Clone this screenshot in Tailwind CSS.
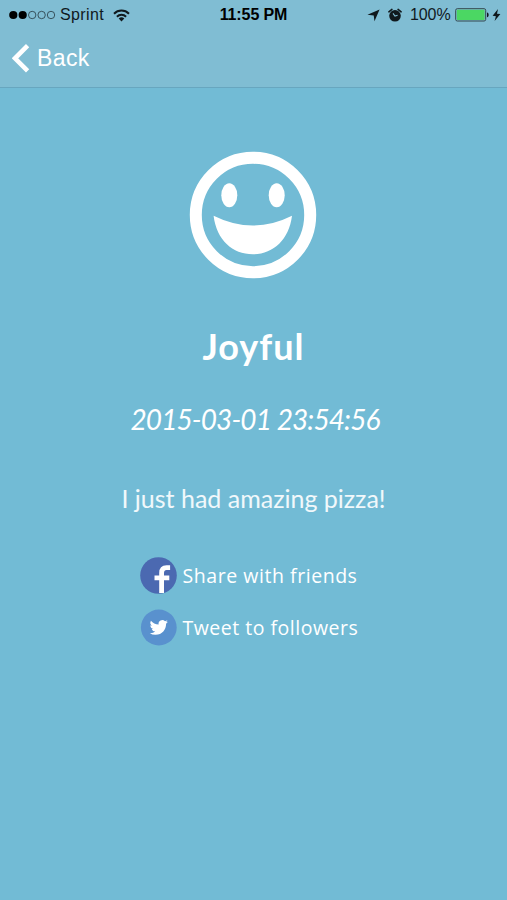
<!DOCTYPE html>
<html lang="en">
  <head>
    <meta charset="UTF-8" />
    <meta name="viewport" content="width=device-width, initial-scale=1.0" />
    <title>Joyful</title>
    <script src="https://cdn.jsdelivr.net/npm/@tailwindcss/browser@4"></script>
  </head>
  <body class="h-screen flex flex-col overflow-hidden bg-[#72bbd5] text-white">
    <header class="h-[88px] shrink-0 bg-[#80bdd3] border-b border-[#68a6bf]">
      <!-- Status bar -->
      <div
        class="h-[30px] pl-[9px] pr-[6px] grid grid-cols-[1fr_auto_1fr] items-center text-[#10191d] text-[16px] leading-none font-['Liberation_Sans',sans-serif]"
      >
        <div class="flex items-center">
          <svg class="w-[47px] h-[10px]" viewBox="0 0 47 10">
            <g fill="#000">
              <circle cx="4.3" cy="5" r="4.1" />
              <circle cx="13.7" cy="5" r="4.1" />
            </g>
            <g fill="none" stroke="#24373f" stroke-width=".8">
              <circle cx="23.2" cy="5" r="3.7" />
              <circle cx="32.6" cy="5" r="3.7" />
              <circle cx="42" cy="5" r="3.7" />
            </g>
          </svg>
          <span class="ml-1 w-[45px] tracking-[0.4px]">Sprint</span>
          <svg class="ml-[8px] w-[17px] h-[13px]" viewBox="0 0 17 13">
            <g fill="none" stroke="#10191d" stroke-width="2">
              <path d="M1 4.7a10.6 10.6 0 0 1 15 0" />
              <path d="M3.900 7.700a6.500 6.500 0 0 1 9.200 0" />
            </g>
            <path d="M8.500 12.500 5.700 9.600a4 4 0 0 1 5.600 0z" fill="#10191d" />
          </svg>
        </div>
        <span class="mr-[3px] font-bold tracking-[-0.1px] text-black">11:55 PM</span>
        <div class="flex items-center justify-end">
          <svg class="w-[13px] h-[13px]" viewBox="0 0 12 12">
            <path d="M11.6.4 6.900 11.300 6.200 6.100.4 5.400z" fill="#10191d" />
          </svg>
          <svg class="ml-[8px] w-[14px] h-[14px]" viewBox="0 0 14 14">
            <circle cx="7" cy="7.800" r="5.800" fill="#10191d" />
            <path
              d="M.9 3.800 3.900 1.400M13.100 3.800 10.100 1.400"
              stroke="#10191d"
              stroke-width="1.6"
              stroke-linecap="round"
            />
            <path d="M5 5.400 7 8l2.600-.7" fill="none" stroke="#80bdd3" stroke-width="1.1" />
          </svg>
          <span class="ml-[8px] w-[41px] tracking-[-0.1px]">100%</span>
          <svg class="ml-[4px] w-[35px] h-[14px]" viewBox="0 0 35 14">
            <rect x=".7" y=".7" width="30" height="12.300" rx="1.600" fill="none" stroke="#33474d" />
            <rect x="1.800" y="1.800" width="27.800" height="10.100" rx=".6" fill="#4bd763" />
            <path d="M32 4.600c2.200.3 2.200 4.400 0 4.700z" fill="#10191d" />
          </svg>
          <svg class="ml-[2px] w-[9px] h-[12px]" viewBox="0 0 9 12">
            <path d="M6 0 .6 6.800l3.300.4L2.600 12 8.400 5.100 5 4.700z" fill="#10191d" />
          </svg>
        </div>
      </div>

      <!-- Back button -->
      <button class="h-[56px] pl-[12px] flex items-center">
        <svg class="w-[18px] h-[29px]" viewBox="0 0 18 29">
          <path d="M15.600 1.700 3 14.300l12.600 12.600" fill="none" stroke="#fff" stroke-width="4.600" />
        </svg>
        <span
          class="ml-[7px] text-[23px] leading-none tracking-[0.4px] font-['Liberation_Sans',sans-serif]"
          >Back</span
        >
      </button>
    </header>

    <main class="flex flex-col items-center pt-[63px] whitespace-nowrap">
      <svg class="mr-[2px] w-[128px] h-[128px]" viewBox="0 0 128 128">
        <circle cx="64" cy="64" r="57.200" fill="none" stroke="#fff" stroke-width="12" />
        <g fill="#fff">
          <ellipse cx="40.300" cy="44.300" rx="8" ry="12" />
          <ellipse cx="87.700" cy="44.300" rx="8" ry="12" />
          <path d="M24.600 64.800Q64 84.400 103 64.800C100 89 84 103.300 63.800 103.300S27.500 89 24.600 64.800z" />
        </g>
      </svg>

      <h1
        class="mt-[47px] h-[40px] text-[36px] leading-[40px] font-bold tracking-[1px] font-['Lato',sans-serif]"
      >
        Joyful
      </h1>
      <p
        class="mt-[38px] ml-[3px] text-[28px] leading-[30px] italic tracking-[-0.9px] font-['Lato',sans-serif]"
      >
        2015-03-01 23:54:56
      </p>
      <p class="mt-[49px] text-[25px] leading-[30px] text-white/90 font-['Lato',sans-serif]">
        I just had amazing pizza!
      </p>

      <!-- Share buttons -->
      <div
        class="mt-[44px] w-[228px] flex flex-col gap-[15px] text-[19.5px] leading-none font-['Open_Sans',sans-serif]"
      >
        <button class="h-[37px] flex items-center">
          <svg class="w-[37px] h-[37px]" viewBox="0 0 37 37">
            <circle cx="18.500" cy="18.500" r="18.300" fill="#4b69b1" />
            <path
              d="M21.600 36V16c0-3.600 1.800-5.300 5-5.300h3.500M14.500 20.800h14.800"
              fill="none"
              stroke="#fff"
              stroke-width="4.800"
            />
          </svg>
          <span class="ml-[6px] tracking-[0.55px]">Share with friends</span>
        </button>
        <button class="h-[37px] flex items-center">
          <svg class="w-[37px] h-[37px]" viewBox="0 0 37 37">
            <circle cx="18.800" cy="18.500" r="17.900" fill="#5991ce" />
            <path
              transform="translate(9.700 9.300) scale(.76)"
              d="M23.950 4.570a10 10 0 0 1-2.820.770 4.960 4.960 0 0 0 2.160-2.720c-.950.560-2 .960-3.130 1.190a4.920 4.920 0 0 0-8.380 4.480C7.690 8.100 4.070 6.130 1.640 3.160a4.920 4.920 0 0 0 1.520 6.570 4.900 4.900 0 0 1-2.230-.610v.060a4.920 4.920 0 0 0 3.950 4.830 5 5 0 0 1-2.210.080 4.940 4.940 0 0 0 4.600 3.420A9.870 9.870 0 0 1 0 19.540a14 14 0 0 0 7.550 2.210c9.050 0 14-7.500 14-13.980l-.020-.640a9.900 9.900 0 0 0 2.420-2.560z"
              fill="#fff"
            />
          </svg>
          <span class="ml-[6px] tracking-[0.5px]">Tweet to followers</span>
        </button>
      </div>
    </main>
  </body>
</html>
